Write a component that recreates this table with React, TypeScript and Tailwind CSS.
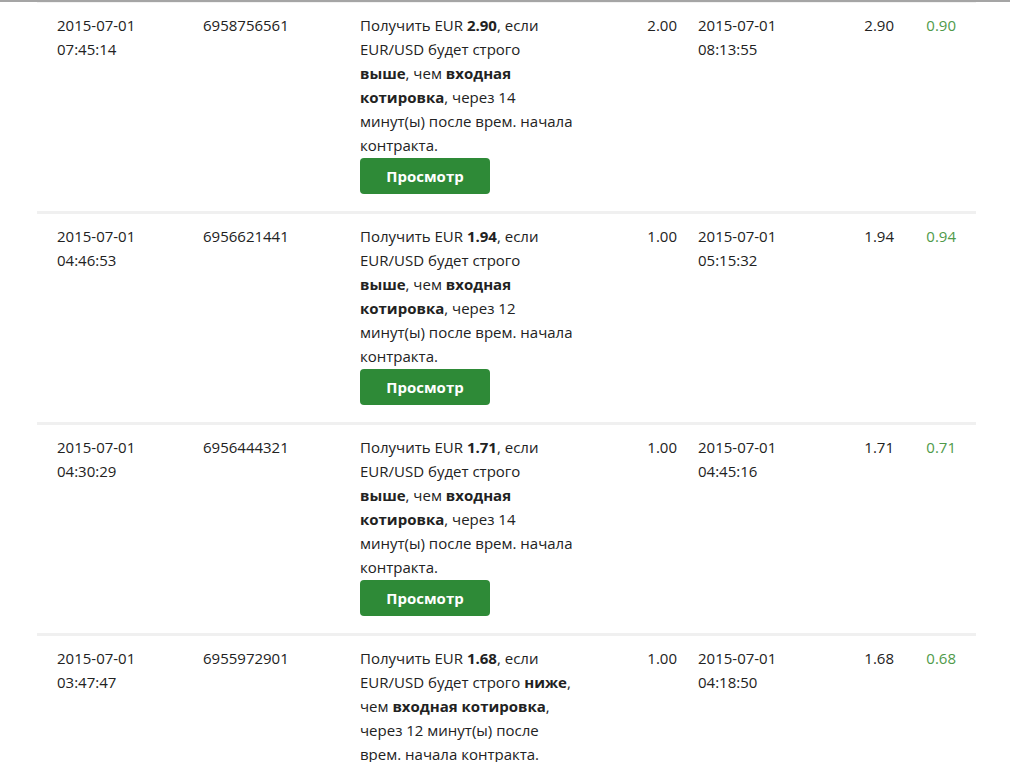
import React from "react";

type Row = {
  start: [string, string];
  id: string;
  lines: React.ReactNode[];
  amount: string;
  end: [string, string];
  payout: string;
  profit: string;
};

const rows: Row[] = [
  {
    start: ["2015-07-01", "07:45:14"],
    id: "6958756561",
    lines: [
      <>Получить EUR <b>2.90</b>, если</>,
      <>EUR/USD будет строго</>,
      <><b>выше</b>, чем <b>входная</b></>,
      <><b>котировка</b>, через 14</>,
      <>минут(ы) после врем. начала</>,
      <>контракта.</>,
    ],
    amount: "2.00",
    end: ["2015-07-01", "08:13:55"],
    payout: "2.90",
    profit: "0.90",
  },
  {
    start: ["2015-07-01", "04:46:53"],
    id: "6956621441",
    lines: [
      <>Получить EUR <b>1.94</b>, если</>,
      <>EUR/USD будет строго</>,
      <><b>выше</b>, чем <b>входная</b></>,
      <><b>котировка</b>, через 12</>,
      <>минут(ы) после врем. начала</>,
      <>контракта.</>,
    ],
    amount: "1.00",
    end: ["2015-07-01", "05:15:32"],
    payout: "1.94",
    profit: "0.94",
  },
  {
    start: ["2015-07-01", "04:30:29"],
    id: "6956444321",
    lines: [
      <>Получить EUR <b>1.71</b>, если</>,
      <>EUR/USD будет строго</>,
      <><b>выше</b>, чем <b>входная</b></>,
      <><b>котировка</b>, через 14</>,
      <>минут(ы) после врем. начала</>,
      <>контракта.</>,
    ],
    amount: "1.00",
    end: ["2015-07-01", "04:45:16"],
    payout: "1.71",
    profit: "0.71",
  },
  {
    start: ["2015-07-01", "03:47:47"],
    id: "6955972901",
    lines: [
      <>Получить EUR <b>1.68</b>, если</>,
      <>EUR/USD будет строго <b>ниже</b>,</>,
      <>чем <b>входная котировка</b>,</>,
      <>через 12 минут(ы) после</>,
      <>врем. начала контракта.</>,
    ],
    amount: "1.00",
    end: ["2015-07-01", "04:18:50"],
    payout: "1.68",
    profit: "0.68",
  },
];

export default function App() {
  return (
    <div
      className="min-h-screen bg-white text-[15px] leading-[24px] text-[#222]"
      style={{ fontFamily: "'Open Sans', Lato, Arial, sans-serif" }}
    >
      <div className="h-[2px] w-full bg-[#a5a5a5]" />
      <div className="ml-[37px] w-[939px]">
        {rows.map((r, i) => (
          <div
            key={r.id}
            className={`flex pl-[20px] pt-[10px] pb-[17px] ${
              i === 0 ? "border-t border-[#f2f2f2]" : "border-t-[3px] border-[#f0f0f0]"
            }`}
          >
            <div className="w-[146px] shrink-0">
              {r.start[0]}
              <br />
              {r.start[1]}
            </div>
            <div className="w-[157px] shrink-0">{r.id}</div>
            <div className="w-[230px] shrink-0">
              {r.lines.map((l, j) => (
                <div key={j} className="whitespace-nowrap">
                  {l}
                </div>
              ))}
              <button className="mt-[1px] flex h-[36px] w-[130px] items-center justify-center rounded-[4px] bg-[#2e8a37] text-[15px] font-bold text-white">
                Просмотр
              </button>
            </div>
            <div className="w-[87px] shrink-0 text-right">{r.amount}</div>
            <div className="ml-[21px] w-[145px] shrink-0">
              {r.end[0]}
              <br />
              {r.end[1]}
            </div>
            <div className="w-[51px] shrink-0 text-right">{r.payout}</div>
            <div className="w-[62px] shrink-0 text-right text-[#4f9a4a]">{r.profit}</div>
          </div>
        ))}
      </div>
    </div>
  );
}
